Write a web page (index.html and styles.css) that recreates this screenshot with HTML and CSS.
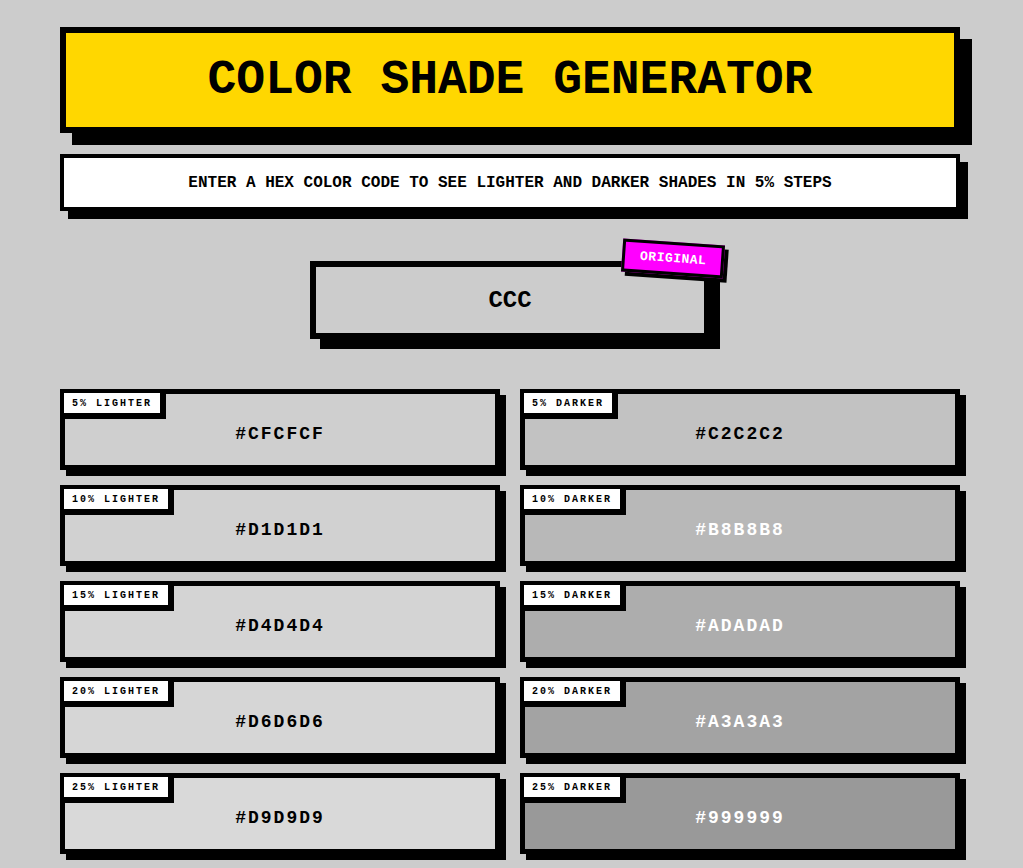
FILE: index.html
```html
<!DOCTYPE html>
<html lang="en">
<head>
    <meta charset="UTF-8">
    <meta name="viewport" content="width=device-width, initial-scale=1.0">
    <title>Color Shade Generator</title>
    <link rel="stylesheet" href="styles.css">
</head>
<body>
    <div class="container">
        <header class="title-box">
            <h1>COLOR SHADE GENERATOR</h1>
        </header>
        <p class="subtitle">ENTER A HEX COLOR CODE TO SEE LIGHTER AND DARKER SHADES IN 5% STEPS</p>

        <div class="picker">
            <input type="text" id="colorInput" class="color-input" value="CCC" maxlength="7" spellcheck="false">
            <span class="badge">ORIGINAL</span>
        </div>

        <div id="shades" class="shades"></div>
    </div>

    <script>
        const input = document.getElementById('colorInput');
        const shadesDiv = document.getElementById('shades');

        function parseHex(value) {
            let hex = value.replace('#', '').trim();
            if (hex.length === 3) {
                hex = hex.split('').map(c => c + c).join('');
            }
            if (!/^[0-9a-fA-F]{6}$/.test(hex)) return null;
            return [0, 2, 4].map(i => parseInt(hex.substr(i, 2), 16));
        }

        function toHex(rgb) {
            return '#' + rgb.map(v => v.toString(16).padStart(2, '0')).join('').toUpperCase();
        }

        // black text on light shades, white on dark ones
        function textColor(rgb) {
            const brightness = (rgb[0] * 299 + rgb[1] * 587 + rgb[2] * 114) / 1000;
            return brightness >= 186 ? '#000' : '#fff';
        }

        function card(label, rgb) {
            const hex = toHex(rgb);
            return `
                <div class="shade" style="background-color:${hex}; color:${textColor(rgb)}">
                    <span class="shade-label">${label}</span>
                    <div class="shade-hex">${hex}</div>
                </div>`;
        }

        function render() {
            const rgb = parseHex(input.value);
            if (!rgb) return;
            document.body.style.backgroundColor = toHex(rgb);
            input.style.backgroundColor = toHex(rgb);

            let html = '';
            for (let step = 5; step <= 50; step += 5) {
                const p = step / 100;
                const lighter = rgb.map(v => Math.round(v + (255 - v) * p));
                const darker = rgb.map(v => Math.round(v * (1 - p)));
                html += card(`${step}% LIGHTER`, lighter);
                html += card(`${step}% DARKER`, darker);
            }
            shadesDiv.innerHTML = html;
        }

        input.addEventListener('input', render);
        render();
    </script>
</body>
</html>
```

FILE: styles.css
```css
body {
    margin: 0;
    padding: 27px 63px 40px 60px;
    background-color: #cccccc;
    font-family: "Liberation Mono", "Courier New", monospace;
    color: #000;
}

.container {
    max-width: 900px;
}

.title-box {
    background-color: #ffd700;
    border: 6px solid #000;
    box-shadow: 12px 12px 0 #000;
    padding: 20px;
    text-align: center;
}

h1 {
    margin: 0;
    font-size: 48px;
    line-height: 54px;
    font-weight: bold;
}

.subtitle {
    margin: 21px 0 0;
    background-color: #fff;
    border: 4px solid #000;
    box-shadow: 8px 8px 0 #000;
    padding: 16px 15px 14px;
    text-align: center;
    font-size: 16px;
    line-height: 19px;
    font-weight: bold;
}

/* original colour input with the tilted tag */
.picker {
    position: relative;
    width: 400px;
    margin: 50px auto 0;
}

.color-input {
    display: block;
    width: 100%;
    height: 78px;
    box-sizing: border-box;
    padding: 0;
    border: 6px solid #000;
    border-radius: 0;
    background-color: #cccccc;
    box-shadow: 10px 10px 0 #000;
    font-family: "Liberation Mono", "Courier New", monospace;
    font-size: 24px;
    font-weight: bold;
    text-align: center;
    color: #000;
    outline: none;
}

.badge {
    position: absolute;
    top: -19px;
    right: -14px;
    background-color: #ff00ff;
    color: #fff;
    border: 3px solid #000;
    box-shadow: 4px 4px 0 #000;
    padding: 6px 15px;
    font-size: 13px;
    line-height: 15px;
    letter-spacing: 0.5px;
    font-weight: bold;
    transform: rotate(4deg);
}

.shades {
    display: grid;
    grid-template-columns: 1fr 1fr;
    gap: 15px 20px;
    margin-top: 50px;
}

.shade {
    position: relative;
    border: 5px solid #000;
    box-shadow: 6px 6px 0 #000;
    padding: 30px 20px 20px;
    text-align: center;
}

.shade-label {
    position: absolute;
    top: -5px;
    left: -5px;
    background-color: #fff;
    color: #000;
    border: 4px solid #000;
    box-shadow: 2px 2px 0 #000;
    padding: 5px 8px 3px;
    font-size: 10px;
    line-height: 12px;
    letter-spacing: 2px;
    font-weight: bold;
}

.shade-hex {
    font-size: 18px;
    line-height: 21px;
    letter-spacing: 2px;
    font-weight: bold;
}
```
